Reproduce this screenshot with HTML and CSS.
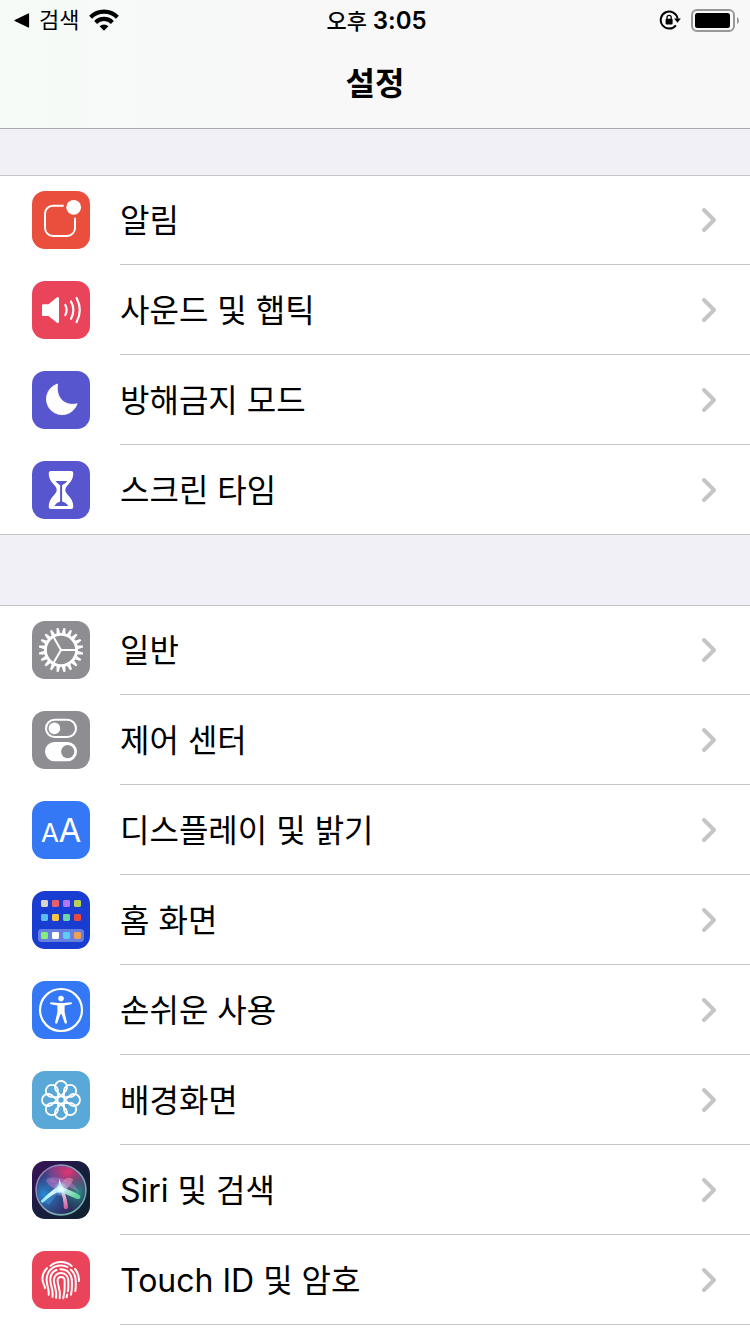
FILE: index.html
```html
<!DOCTYPE html>
<html lang="ko">
<head>
<meta charset="utf-8">
<meta name="viewport" content="width=device-width, initial-scale=1">
<title>설정</title>
<link rel="stylesheet" href="styles.css">
</head>
<body>
<svg class="defs" width="0" height="0" aria-hidden="true">
  <defs>
    <symbol id="chevron" viewBox="0 0 16 26"><path d="M3 3L13 13L3 23" fill="none" stroke="#c5c5c7" stroke-width="4" stroke-linecap="round" stroke-linejoin="round"/></symbol>
  </defs>
</svg>
<header class="header">
  <div class="status">
    <div class="status-left">
      <button class="back" type="button">
        <svg width="16" height="16" viewBox="0 0 16 16" aria-hidden="true"><path d="M1 8.5L14.5 2V15Z" stroke="#000" stroke-width="1.2" stroke-linejoin="round"/></svg>
        <span>검색</span>
      </button>
      <svg width="30" height="22" viewBox="0 0 30 22" aria-label="Wi-Fi"><g fill="none" stroke="#000" stroke-width="4.2"><path d="M1.6 8.2A19 19 0 0 1 28.4 8.2"/><path d="M6.6 13.4A12 12 0 0 1 23.4 13.4"/></g><path d="M15 21.8L10.6 17.3A6.3 6.3 0 0 1 19.4 17.3Z"/></svg>
    </div>
    <div class="clock">오후 <span class="digits">3:05</span></div>
    <div class="status-right">
      <svg width="22" height="20" viewBox="0 0 22 20" aria-label="화면 방향 고정"><path d="M16.9 15.3A8.5 8.5 0 1 1 18.6 8.6" fill="none" stroke="#000" stroke-width="2"/><path d="M15 8.6H21.8L18.5 12.8Z"/><rect x="6.6" y="8.8" width="7" height="5.8" rx="1"/><path d="M8 9.5V7.4A2.1 2.1 0 0 1 12.2 7.4V9.5" fill="none" stroke="#000" stroke-width="1.3"/></svg>
      <svg width="48" height="24" viewBox="0 0 48 24" aria-label="배터리"><rect x="1" y="2" width="42" height="21" rx="5" fill="none" stroke="#98989a" stroke-width="2"/><rect x="4" y="5" width="35" height="15" rx="2.5"/><path d="M46 9Q48 10 48 12.5T46 16Z" fill="#98989a"/></svg>
    </div>
  </div>
  <h1 class="title">설정</h1>
</header>
<main class="content">
  <nav class="group" aria-label="알림 및 사용">
    <a class="row" href="#notifications">
      <svg class="icon red" viewBox="0 0 58 58"><path d="M31.7 14.7H21A8 8 0 0 0 13 22.7V37A8 8 0 0 0 21 45H35A8 8 0 0 0 43 37V26.7" fill="none" stroke="#fff" stroke-width="2"/><circle cx="41.7" cy="16.3" r="7.4" fill="#fff"/></svg>
      <span class="label"><span class="text">알림</span><svg class="chevron"><use href="#chevron"/></svg></span>
    </a>
    <a class="row" href="#sounds">
      <svg class="icon pink" viewBox="0 0 58 58"><path d="M11.3 23.3H16.5L25 16.3Q27 15.3 27 17.5V40.5Q27 42.7 25 41.7L16.5 35H11.3Q10 35 10 33.7V24.6Q10 23.3 11.3 23.3Z" fill="#fff"/><g fill="none" stroke="#fff" stroke-width="2.2" stroke-linecap="round"><path d="M33.3 24Q36 29 33.3 34"/><path d="M39 20.5Q43.7 29 39 37.7"/><path d="M44.6 17Q51 29 44.6 41"/></g></svg>
      <span class="label"><span class="text">사운드 및 햅틱</span><svg class="chevron"><use href="#chevron"/></svg></span>
    </a>
    <a class="row" href="#do-not-disturb">
      <svg class="icon purple" viewBox="0 0 58 58"><path d="M25.5 13A15.7 15.7 0 1 0 45.1 32.7C35 35.5 23.5 29 25.5 13Z" fill="#fff" stroke="#fff" stroke-width=".8" stroke-linejoin="round"/></svg>
      <span class="label"><span class="text">방해금지 모드</span><svg class="chevron"><use href="#chevron"/></svg></span>
    </a>
    <a class="row" href="#screen-time">
      <svg class="icon purple" viewBox="0 0 58 58"><path d="M19 10H39Q41.3 10 41.3 12.3C41.3 22 33.3 24 33.3 29S41.3 36 41.3 45.7Q41.3 48 39 48H19Q16.7 48 16.7 45.7C16.7 36 24.7 34 24.7 29S16.7 22 16.7 12.3Q16.7 10 19 10Z" fill="#fff"/><path d="M23.6 20H35.3Q33.5 22.8 30.1 24.2V40.5Q34.5 41.6 36.3 45H22.3Q24 41.6 28.1 40.5V24.2Q25.2 22.8 23.6 20Z" fill="#5856ce"/></svg>
      <span class="label"><span class="text">스크린 타임</span><svg class="chevron"><use href="#chevron"/></svg></span>
    </a>
  </nav>
  <nav class="group group-last" aria-label="기기 설정">
    <a class="row" href="#general">
      <svg class="icon gray" viewBox="0 0 58 58">
        <defs>
          <path id="tooth" d="M27.1 12.5L28 6.8H30L30.9 12.5Z"/>
          <g id="teeth"><use href="#tooth"/><use href="#tooth" transform="rotate(18 29 29)"/><use href="#tooth" transform="rotate(36 29 29)"/><use href="#tooth" transform="rotate(54 29 29)"/><use href="#tooth" transform="rotate(72 29 29)"/></g>
        </defs>
        <g fill="#fff" transform="rotate(9 29 29)"><use href="#teeth"/><use href="#teeth" transform="rotate(90 29 29)"/><use href="#teeth" transform="rotate(180 29 29)"/><use href="#teeth" transform="rotate(270 29 29)"/></g>
        <circle cx="29" cy="29" r="15.6" fill="none" stroke="#fff" stroke-width="2.9"/><path d="M44 29H29L21.2 15.5M29 29L21.2 42.5" fill="none" stroke="#fff" stroke-width="2"/>
      </svg>
      <span class="label"><span class="text">일반</span><svg class="chevron"><use href="#chevron"/></svg></span>
    </a>
    <a class="row" href="#control-center">
      <svg class="icon gray" viewBox="0 0 58 58"><rect x="14" y="8.7" width="30" height="17.4" rx="8.7" fill="none" stroke="#fff" stroke-width="2"/><circle cx="22.4" cy="17.4" r="5.8" fill="#fff"/><rect x="13" y="31" width="32" height="19.3" rx="9.6" fill="#fff"/><circle cx="35.7" cy="40.6" r="6.6" fill="#8e8d92"/></svg>
      <span class="label"><span class="text">제어 센터</span><svg class="chevron"><use href="#chevron"/></svg></span>
    </a>
    <a class="row" href="#display">
      <svg class="icon blue" viewBox="0 0 58 58" aria-hidden="true"><text class="aa-small" x="18" y="41" text-anchor="middle">A</text><text class="aa-large" x="38" y="41" text-anchor="middle">A</text></svg>
      <span class="label"><span class="text">디스플레이 및 밝기</span><svg class="chevron"><use href="#chevron"/></svg></span>
    </a>
    <a class="row" href="#home-screen">
      <svg class="icon navy" viewBox="0 0 58 58"><rect x="6" y="38" width="46" height="13" rx="3.5" fill="#667fdf"/><rect x="9" y="9" width="7" height="7" rx="1.4" fill="#d8d5cc"/><rect x="20" y="9" width="7" height="7" rx="1.4" fill="#ec5f68"/><rect x="31" y="9" width="7" height="7" rx="1.4" fill="#b276f0"/><rect x="42" y="9" width="7" height="7" rx="1.4" fill="#b9d053"/><rect x="9" y="23" width="7" height="7" rx="1.4" fill="#5abcf5"/><rect x="20" y="23" width="7" height="7" rx="1.4" fill="#f5c443"/><rect x="31" y="23" width="7" height="7" rx="1.4" fill="#6fd5a5"/><rect x="42" y="23" width="7" height="7" rx="1.4" fill="#e84b3c"/><rect x="9" y="41" width="7" height="7" rx="1.4" fill="#86ec7d"/><rect x="20" y="41" width="7" height="7" rx="1.4" fill="#fff"/><rect x="31" y="41" width="7" height="7" rx="1.4" fill="#5fcbf8"/><rect x="42" y="41" width="7" height="7" rx="1.4" fill="#f0a053"/></svg>
      <span class="label"><span class="text">홈 화면</span><svg class="chevron"><use href="#chevron"/></svg></span>
    </a>
    <a class="row" href="#accessibility">
      <svg class="icon blue" viewBox="0 0 58 58"><circle cx="29" cy="29" r="21" fill="none" stroke="#fff" stroke-width="2.2"/><circle cx="29" cy="17.6" r="2.8" fill="#fff"/><path d="M18.8 21.3L26.5 22H31.5L39.2 21.3Q40.6 22.4 39.3 23.3L32.6 24.6V31L35 41.7Q34.2 43.4 32.8 42.2L29.6 33.2H28.4L25.2 42.2Q23.8 43.4 23 41.7L25.4 31V24.6L18.7 23.3Q17.4 22.4 18.8 21.3Z" fill="#fff"/></svg>
      <span class="label"><span class="text">손쉬운 사용</span><svg class="chevron"><use href="#chevron"/></svg></span>
    </a>
    <a class="row" href="#wallpaper">
      <svg class="icon sky" viewBox="0 0 58 58">
        <defs><path id="petal" d="M29 25L23.9 19.4A6.1 6.1 0 0 1 23 16A6 6 0 0 1 35 16A6.1 6.1 0 0 1 34.1 19.4Z"/></defs>
        <g fill="none" stroke="#fff" stroke-width="1.8"><use href="#petal"/><use href="#petal" transform="rotate(45 29 29)"/><use href="#petal" transform="rotate(90 29 29)"/><use href="#petal" transform="rotate(135 29 29)"/><use href="#petal" transform="rotate(180 29 29)"/><use href="#petal" transform="rotate(225 29 29)"/><use href="#petal" transform="rotate(270 29 29)"/><use href="#petal" transform="rotate(315 29 29)"/><circle cx="29" cy="29" r="3.6"/></g>
      </svg>
      <span class="label"><span class="text">배경화면</span><svg class="chevron"><use href="#chevron"/></svg></span>
    </a>
    <a class="row" href="#siri">
      <svg class="icon siri" viewBox="0 0 58 58">
        <defs>
          <radialGradient id="siri-pink" cx=".65" cy=".15" r=".6"><stop offset="0" stop-color="#e03570"/><stop offset=".6" stop-color="#96408c" stop-opacity=".8"/><stop offset="1" stop-color="#502a80" stop-opacity="0"/></radialGradient>
          <radialGradient id="siri-blue" cx=".15" cy=".6" r=".6"><stop offset="0" stop-color="#2a8cd4"/><stop offset="1" stop-color="#2e5aa8" stop-opacity="0"/></radialGradient>
          <radialGradient id="siri-teal" cx=".85" cy=".55" r=".45"><stop offset="0" stop-color="#2b8f87"/><stop offset="1" stop-color="#1d4b5e" stop-opacity="0"/></radialGradient>
          <radialGradient id="siri-glow"><stop offset="0" stop-color="#fff"/><stop offset=".35" stop-color="#c8f8ff" stop-opacity=".7"/><stop offset="1" stop-color="#76c8ff" stop-opacity="0"/></radialGradient>
          <linearGradient id="siri-ring" x2="1" y2="1"><stop offset="0" stop-color="#9a6ab8"/><stop offset=".5" stop-color="#8aaabb"/><stop offset="1" stop-color="#61b1a3"/></linearGradient>
          <linearGradient id="siri-left" x1="1" y1="0" x2="0" y2="1"><stop offset="0" stop-color="#fff"/><stop offset="1" stop-color="#8deaf6"/></linearGradient>
          <linearGradient id="siri-down" x2="0" y2="1"><stop offset="0" stop-color="#fff"/><stop offset="1" stop-color="#e45a9e"/></linearGradient>
          <linearGradient id="siri-right" x2="1" y2=".5"><stop offset="0" stop-color="#fff"/><stop offset="1" stop-color="#5fe0a0"/></linearGradient>
        </defs>
        <circle cx="29" cy="29" r="24" fill="#2d2c60"/><circle cx="29" cy="29" r="24" fill="url(#siri-pink)"/><circle cx="29" cy="29" r="24" fill="url(#siri-blue)"/><circle cx="29" cy="29" r="24" fill="url(#siri-teal)"/>
        <path d="M28 28C26 21 21 17 14 19C16 25 22 29 28 28Z" fill="#c07fd0" opacity=".5"/>
        <path d="M28 28C29 20 34 14 41 18C42 20 37 25 33 31Z" fill="#e88aae" opacity=".6"/>
        <path d="M14 18C25 14 41 18 47 31C37 25 26 23 14 18Z" fill="#c08cd4" opacity=".4"/>
        <path d="M28 29L17 44Q11 40 10 40Z" fill="#4b9ee0" opacity=".4"/>
        <path d="M8.8 40Q18 30 28 24.5L30 29Q19 34 11 41.6Q9 42 8.8 40Z" fill="url(#siri-left)"/>
        <path d="M27.5 27L31.5 28Q35.5 39 36 47Q33.8 49.5 31.8 47Q31.8 37 27.5 27Z" fill="url(#siri-down)" opacity=".9"/>
        <path d="M28 26Q40 29 48 34.5Q49.5 38.5 45 38Q36 34.5 28 30Z" fill="url(#siri-right)" opacity=".9"/>
        <path d="M27.5 18L30.5 26L35 29L30 31L27 32L24 29L26 25Z" fill="#e9feff" opacity=".85"/>
        <circle cx="29" cy="28" r="8" fill="url(#siri-glow)"/>
        <circle cx="29" cy="29" r="24.9" fill="none" stroke="url(#siri-ring)" stroke-width="1.6"/>
      </svg>
      <span class="label"><span class="text">Siri 및 검색</span><svg class="chevron"><use href="#chevron"/></svg></span>
    </a>
    <a class="row" href="#touch-id">
      <svg class="icon pink" viewBox="0 0 58 58"><g fill="none" stroke="#fff" stroke-width="2" stroke-linecap="round"><path d="M18.5 14.8C24.5 9.8 33.5 9.8 39.7 15"/><path d="M15 17.3C10.2 22 9.6 28 11.6 33Q13 35 12.9 37.3"/><path d="M43 18C46 21.5 47 25.5 47 30"/><path d="M16.7 43.7C17.3 37 14.6 34.5 14.6 29C14.6 19 22 14.6 29 14.6C31.5 14.6 33.6 15.2 35.4 16.2"/><path d="M38.8 18.7C42.5 21.7 43.6 26 43.7 30Q44 36 43.3 40"/><path d="M20.5 45.8C21.5 37.5 18.3 35 18.3 29C18.3 22.6 22 19.8 24.5 19"/><path d="M28.4 18.3C36 18.1 39.8 24 39.9 30C40.1 35.5 40 39.7 39 43.7"/><path d="M24.1 46.8C25.3 39 21.9 35 21.9 29.4C21.9 25 25 22 29 22C34 22 36.2 26 36.3 30C36.5 35 36.4 38 35.8 40.2"/><path d="M35.2 43.4L34.6 46.3"/><path d="M27.7 47.2C29 39 25.6 34.5 25.6 29.6C25.6 24.6 32.6 24.6 32.7 30C33 36 32.6 42 31.3 47.2"/></g></svg>
      <span class="label"><span class="text">Touch ID 및 암호</span><svg class="chevron"><use href="#chevron"/></svg></span>
    </a>
  </nav>
</main>
</body>
</html>
```

FILE: styles.css
```css
* {
  box-sizing: border-box;
}

body {
  margin: 0;
  min-height: 100vh;
  display: flex;
  flex-direction: column;
  background: #f1f0f6;
  color: #000;
  font-family: Inter, "Noto Sans CJK KR", sans-serif;
}

svg {
  display: block;
  flex: none;
}

.defs {
  position: absolute;
}

.header {
  background: linear-gradient(90deg, #f6fbf7 0, #f7f9f8 24%, #f8f8f8 40%);
  border-bottom: 1px solid #a9a9ad;
}

.status {
  display: grid;
  grid-template-columns: 1fr auto 1fr;
  align-items: center;
  height: 40px;
  padding: 0 11px 0 14px;
}

.status-left,
.status-right,
.back {
  display: flex;
  align-items: center;
}

.status-left {
  gap: 10px;
}

.status-right {
  justify-content: flex-end;
  gap: 10px;
}

.back {
  gap: 9px;
  padding: 0;
  border: 0;
  background: none;
  color: inherit;
  font: inherit;
  font-size: 22px;
  line-height: 32px;
}

.clock {
  padding-top: 2px;
  font-size: 22px;
  font-weight: 500;
  line-height: 32px;
}

.digits {
  font-size: 24px;
  font-weight: 600;
}

.title {
  margin: 0;
  height: 88px;
  font-size: 32px;
  font-weight: 700;
  line-height: 88px;
  text-align: center;
}

.content {
  flex: 1;
  display: flex;
  flex-direction: column;
  gap: 70px;
  padding-top: 46px;
}

.group {
  background: #fff;
  border-top: 1px solid #c6c6c8;
  border-bottom: 1px solid #c6c6c8;
}

.group-last {
  flex: 1;
  border-bottom: 0;
}

.row {
  display: flex;
  align-items: center;
  gap: 30px;
  height: 90px;
  padding-left: 32px;
  color: inherit;
  text-decoration: none;
}

.row:first-child,
.group:not(.group-last) .row:last-child {
  height: 89px;
}

.row:first-child .icon {
  margin-bottom: 1px;
}

.label {
  flex: 1;
  align-self: stretch;
  display: flex;
  align-items: center;
  justify-content: space-between;
  padding-right: 33px;
  border-bottom: 1px solid #c6c6c8;
  font-size: 32px;
  line-height: 48px;
}

.text {
  padding-top: 2px;
}

.group:not(.group-last) .row:last-child .label {
  border-bottom: 0;
}

.chevron {
  width: 16px;
  height: 26px;
}

.icon {
  width: 58px;
  height: 58px;
  border-radius: 13px;
}

.red {
  background: #ea4f3d;
}

.pink {
  background: #ea445a;
}

.purple {
  background: #5856ce;
}

.gray {
  background: #8e8d92;
}

.blue {
  background: #3478f6;
}

.navy {
  background: #1a3dd1;
}

.sky {
  background: #59a8d8;
}

.siri {
  background: linear-gradient(135deg, #3b1258, #1a1d40 45%, #10222f);
}

.aa-small,
.aa-large {
  fill: #fff;
}

.aa-small {
  font-size: 26px;
}

.aa-large {
  font-size: 33px;
}
```
